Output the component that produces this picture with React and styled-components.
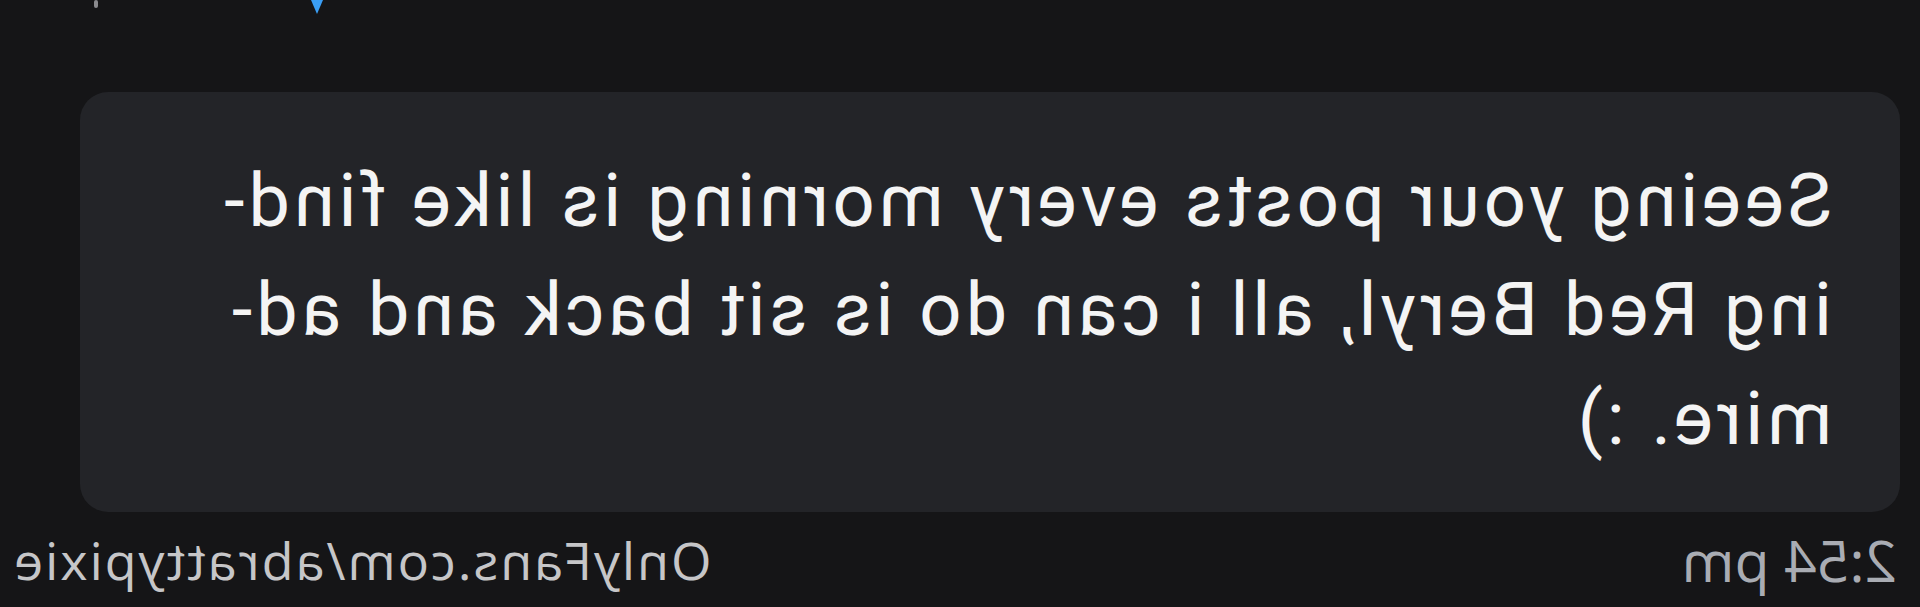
import styled, { createGlobalStyle } from "styled-components";

const GlobalStyle = createGlobalStyle`
  html, body {
    margin: 0;
    padding: 0;
    background: #151517;
  }
  body {
    width: 1920px;
    height: 607px;
    overflow: hidden;
  }
`;

const lines = [
  "Seeing your posts every morning is like find-",
  "ing Red Beryl, all i can do is sit back and ad-",
  "mire. :)",
];

// whole screen is shown flipped, like a front camera capture
const Screen = styled.div`
  width: 1920px;
  height: 607px;
  background: #151517;
  transform: scaleX(-1);
  display: flex;
  flex-direction: column;
  overflow: hidden;
`;

const TopStrip = styled.div`
  height: 92px;
  display: flex;
  justify-content: flex-end;
  align-items: flex-start;
  gap: 210px;
  padding-right: 92px;
  box-sizing: border-box;
`;

const Bubble = styled.div`
  margin: 0 80px 0 20px;
  height: 420px;
  box-sizing: border-box;
  padding: 54px 0 0 68px;
  background: #232428;
  border-radius: 28px;
`;

const MessageText = styled.div`
  font-family: Roboto, "Liberation Sans", sans-serif;
  font-size: 74px;
  line-height: 109px;
  letter-spacing: 3.8px;
  color: #f4f4f4;
  white-space: nowrap;
`;

const Footer = styled.div`
  display: flex;
  justify-content: space-between;
  margin-top: 18px;
  padding: 0 12px 0 23px;
  font-family: "Open Sans", "DejaVu Sans", sans-serif;
  line-height: 60px;
`;

const Time = styled.span`
  color: #a9acb3;
  font-size: 57px;
`;

const Link = styled.span`
  color: #c6c6c8;
  font-size: 52px;
  letter-spacing: 2px;
`;

export default function App() {
  return (
    <>
      <GlobalStyle />
      <Screen>
        <TopStrip>
          <svg width="14" height="16" viewBox="0 0 14 16">
            <path d="M1 0 L13 0 L7 14 Z" fill="#3a9ef5" />
          </svg>
          <svg width="8" height="12" viewBox="0 0 8 12">
            <rect x="2" y="0" width="4" height="8" rx="2" fill="#8a8a8e" />
          </svg>
        </TopStrip>
        <Bubble>
          <MessageText>
            {lines.map((l, i) => (
              <div key={i}>{l}</div>
            ))}
          </MessageText>
        </Bubble>
        <Footer>
          <Time>2:54 pm</Time>
          <Link>OnlyFans.com/abrattypixie</Link>
        </Footer>
      </Screen>
    </>
  );
}
